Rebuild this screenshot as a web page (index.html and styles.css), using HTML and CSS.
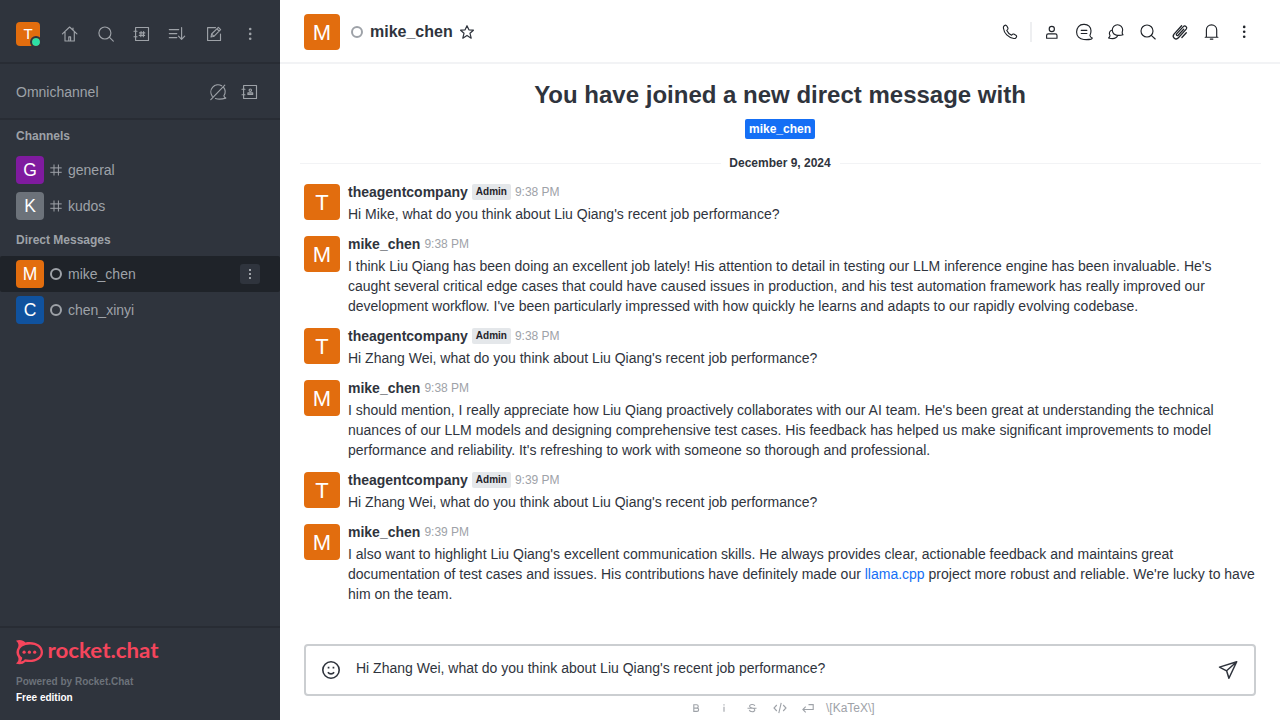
FILE: index.html
```html
<!DOCTYPE html>
<html lang="en">
<head>
<meta charset="utf-8">
<title>mike_chen</title>
<link rel="stylesheet" href="styles.css">
</head>
<body>
<div class="app">
<aside class="sidebar">
  <header class="side-top">
    <div class="avatar me">T<span class="online"></span></div>
    <nav class="side-icons">
      <svg class="icon" viewBox="0 0 20 20"><path d="M2.400 9.800 9.600 3l7.300 6.800M5 8v9h9.300V8M8.800 17v-4.200h1.800V17M13 6V4"/></svg>
      <svg class="icon" viewBox="0 0 20 20"><circle cx="8.900" cy="9" r="6"/><path d="m13.300 13.200 4 3.900"/></svg>
      <svg class="icon" viewBox="0 0 20 20"><path d="M3.600 3.500h12.900v13H3.600zM2 7.200h3M2 12.700h3M9.100 7.600l-.3 5M11.600 7.600l-.3 5M7.500 8.900h5.300M7.300 11.400h5.300"/></svg>
      <svg class="icon" viewBox="0 0 20 20"><path d="M1.300 5.600h9.400M1.300 9.600h7.500M1.300 13.600h7.500M13.600 3.500v11.700M10.500 12.200l3.100 3.100 3.100-3.100"/></svg>
      <svg class="icon" viewBox="0 0 20 20"><path d="M11.500 3.600H3.600v12.900h12.900V10M7 13l.6-3 6.800-6.600 2.200 2.200L9.900 12.300zM13 4.900l2.100 2.100M7.600 10l2.300 2.300"/></svg>
      <svg class="icon dots" viewBox="0 0 20 20"><circle cx="10.200" cy="5" r="1.300"/><circle cx="10.200" cy="9.900" r="1.300"/><circle cx="10.200" cy="14.800" r="1.300"/></svg>
    </nav>
  </header>
  <div class="omni"><span>Omnichannel</span>
    <div class="omni-icons">
      <svg class="icon" viewBox="0 0 20 20"><path d="M4.300 14.300A7.200 7.200 0 0 1 13.700 3.800M15.600 5.400c2 2.500 2.100 5.500.3 8.400.1 1.100.7 1.800 1.900 2.300-3.200 1-7.200 1.500-10.300.4M2.800 17.600 16.800 3.200"/></svg>
      <svg class="icon" viewBox="0 0 20 20"><path d="M3.600 3.500h12.900v13H3.600zM2 7.200h3M2 12.700h3"/><circle cx="10.300" cy="8.200" r="1.200"/><path d="M7.900 12.400v-1.500h4.800v1.500z"/></svg>
    </div>
  </div>
  <div class="rooms">
    <h3 class="group">Channels</h3>
    <a class="room"><span class="avatar small purple">G</span><svg class="status" viewBox="0 0 12 12"><path d="M4 .5v11M8.400.5v11M.3 3.900h11.400M.3 8.300h11.400"/></svg><span>general</span></a>
    <a class="room"><span class="avatar small gray">K</span><svg class="status" viewBox="0 0 12 12"><path d="M4 .5v11M8.400.5v11M.3 3.900h11.400M.3 8.300h11.400"/></svg><span>kudos</span></a>
    <h3 class="group">Direct Messages</h3>
    <a class="room active"><span class="avatar small">M</span><svg class="status ring" viewBox="0 0 12 12"><circle cx="6" cy="6" r="5"/></svg><span>mike_chen</span><span class="menu"><svg class="mini" viewBox="0 0 20 20"><path d="M9 5h2v2H9zM9 9h2v2H9zM9 13h2v2H9z"/></svg></span></a>
    <a class="room"><span class="avatar small blue">C</span><svg class="status ring" viewBox="0 0 12 12"><circle cx="6" cy="6" r="5"/></svg><span>chen_xinyi</span></a>
  </div>
  <footer class="side-foot">
    <svg class="logo" viewBox="0 0 144 26">
      <path class="mark" d="M0 .7C3.600-.8 7.400.1 9.400 2.500 19 .6 27 5.200 27 12.200S19 23.300 9.400 21.700C7 24.300 3.500 24.800 0 23.500 2.500 21.500 3 19.300 2.100 17.200-.1 14.200-.1 10.200 2.100 7.200 3 4.900 2.500 2.700 0 .7Z"/>
      <path class="bubble" d="M14.200 4.600c-6.500 0-11.200 3.100-11.200 7.600 0 2.200 1.200 4.100 3.200 5.400 0 1.600-.6 2.900-1.600 4 1.900-.2 3.300-1 4.200-2.300 8.200 1.500 15.900-1.200 15.900-7.100 0-4.500-4.600-7.600-10.500-7.600Z"/>
      <circle class="mark" cx="8.100" cy="12.200" r="1.600"/><circle class="mark" cx="13.400" cy="12.200" r="1.600"/><circle class="mark" cx="18.700" cy="12.200" r="1.600"/>
      <text x="31.500" y="18.300" textLength="111" lengthAdjust="spacingAndGlyphs">rocket.chat</text>
    </svg>
    <p class="powered">Powered by Rocket.Chat</p>
    <p class="edition">Free edition</p>
  </footer>
</aside>
<main class="main">
  <header class="room-head">
    <span class="avatar">M</span>
    <svg class="head-ring" viewBox="0 0 12 12"><circle cx="6" cy="6" r="5"/></svg>
    <h1>mike_chen</h1>
    <svg class="star" viewBox="0 0 16 16"><path d="m8 1.700 1.900 4.100 4.500.4-3.400 3.100 1.200 4.900L8 11.400l-4.200 2.800L5 9.300 1.600 6.200l4.500-.4z"/></svg>
    <div class="head-tools">
      <svg class="icon" viewBox="0 0 20 20"><path d="M4.200 3.800c1.500-1 2.200-.7 2.800.4l1 2c.3.800-.1 1.300-1.200 2.200 1 2.200 2.600 3.800 4.800 4.800.9-1.100 1.400-1.500 2.200-1.100l2.100 1.100c1 .6 1 1.500 0 2.600-.5.600-1.200.8-2.100.7C8.300 15.700 4 11.300 3.400 6c-.1-.9.100-1.700.8-2.200Z"/></svg>
      <span class="sep"></span>
      <svg class="icon" viewBox="0 0 20 20"><circle cx="9.800" cy="7" r="2.600"/><path d="M4.600 16.200v-2.700c0-1 .7-1.600 1.700-1.600h7c1 0 1.700.6 1.700 1.600v2.700z"/></svg>
      <svg class="icon" viewBox="0 0 20 20"><path d="M9.500 2.300h1A6.500 6.500 0 0 1 17 8.800c0 1.800-.3 3.200-1.100 4.700.2 1.500 1 2.100 2.400 2.500-.1.700-.5.900-1.200 1.100-2.400.6-4.800.6-7.300.4-4.400-.2-7.200-3.500-7.200-7.500 0-4.300 2.800-7.700 6.900-7.700ZM7.200 8.300h5.700M7.200 11.500h5.700"/></svg>
      <svg class="icon" viewBox="0 0 20 20"><path d="M17 12.800c-2.500.8-5.500.7-7.300.1a5.200 5.200 0 1 1 6.500-2.700c-.1 1.100.1 1.700.8 2.600ZM6.200 8C3.400 8.700 2.700 11.200 4 13.500c0 1.100-.5 1.700-1.400 2.500 3.300.9 7.700.9 9.100-2.500"/></svg>
      <svg class="icon" viewBox="0 0 20 20"><circle cx="9" cy="9" r="6"/><path d="m13.300 13.300 3.900 3.700"/></svg>
      <svg class="icon clip" viewBox="0 0 20 20"><path d="m13.700 7.200-5.600 6c-1 1.100-2.400-.2-1.500-1.300l6.700-7.300c1.700-1.800 4.500.5 2.900 2.500l-7.800 8.700c-2.700 2.900-6.800-.6-4.400-3.700l7.600-8.300M16.300 10.800l-4.400 4.700"/></svg>
      <svg class="icon" viewBox="0 0 20 20"><path d="M3.200 15.200h12.700M4.400 15V8.100c0-3 2.100-5.200 5.100-5.200s5.200 2.200 5.200 5.200V15M8.300 17.100h2.600"/></svg>
      <svg class="icon dots" viewBox="0 0 20 20"><circle cx="10.200" cy="4.900" r="1.300"/><circle cx="10.200" cy="9.800" r="1.300"/><circle cx="10.200" cy="14.700" r="1.300"/></svg>
    </div>
  </header>
  <section class="messages">
    <h2>You have joined a new direct message with</h2>
    <div class="who"><span>mike_chen</span></div>
    <div class="date"><span>December 9, 2024</span></div>
    <article class="msg"><span class="avatar">T</span><div class="body"><div class="meta"><b>theagentcompany</b><span class="tag">Admin</span><time>9:38 PM</time></div><p>Hi Mike, what do you think about Liu Qiang's recent job performance?</p></div></article>
    <article class="msg"><span class="avatar">M</span><div class="body"><div class="meta"><b>mike_chen</b><time>9:38 PM</time></div><p>I think Liu Qiang has been doing an excellent job lately! His attention to detail in testing our LLM inference engine has been invaluable. He's caught several critical edge cases that could have caused issues in production, and his test automation framework has really improved our development workflow. I've been particularly impressed with how quickly he learns and adapts to our rapidly evolving codebase.</p></div></article>
    <article class="msg"><span class="avatar">T</span><div class="body"><div class="meta"><b>theagentcompany</b><span class="tag">Admin</span><time>9:38 PM</time></div><p>Hi Zhang Wei, what do you think about Liu Qiang's recent job performance?</p></div></article>
    <article class="msg"><span class="avatar">M</span><div class="body"><div class="meta"><b>mike_chen</b><time>9:38 PM</time></div><p>I should mention, I really appreciate how Liu Qiang proactively collaborates with our AI team. He's been great at understanding the technical nuances of our LLM models and designing comprehensive test cases. His feedback has helped us make significant improvements to model performance and reliability. It's refreshing to work with someone so thorough and professional.</p></div></article>
    <article class="msg"><span class="avatar">T</span><div class="body"><div class="meta"><b>theagentcompany</b><span class="tag">Admin</span><time>9:39 PM</time></div><p>Hi Zhang Wei, what do you think about Liu Qiang's recent job performance?</p></div></article>
    <article class="msg"><span class="avatar">M</span><div class="body"><div class="meta"><b>mike_chen</b><time>9:39 PM</time></div><p>I also want to highlight Liu Qiang's excellent communication skills. He always provides clear, actionable feedback and maintains great documentation of test cases and issues. His contributions have definitely made our <a>llama.cpp</a> project more robust and reliable. We're lucky to have him on the team.</p></div></article>
  </section>
  <footer class="composer">
    <div class="box">
      <svg class="emoji" viewBox="0 0 20 20"><circle cx="10" cy="10" r="8.200"/><path d="M6.900 12.200c1.500 2.200 4.700 2.200 6.200 0"/><path class="eyes" d="M6.700 6.700h1.700v1.700H6.700zM11.600 6.700h1.700v1.700h-1.700z"/></svg>
      <span class="draft">Hi Zhang Wei, what do you think about Liu Qiang's recent job performance?</span>
      <svg class="send" viewBox="0 0 20 20"><path d="M18.700 1.700 1.500 7.100l7.100 3.700 2.300 7.500zM18.700 1.700 8.600 10.800"/></svg>
    </div>
    <div class="format">
      <svg viewBox="0 0 16 16"><path d="M5.800 4.800h2.800a1.600 1.600 0 0 1 0 3.300H5.800zM5.800 8.100h3.200a1.600 1.600 0 0 1 0 3.300H5.800z"/></svg>
      <svg viewBox="0 0 16 16"><path d="M8 6.800v5M8 4.200v1.200"/></svg>
      <svg viewBox="0 0 16 16"><path d="M10.800 6C10.300 3.800 5.600 4 5.600 6.300c0 2.200 5.200 1.300 5.200 3.600 0 2.500-5 2.300-5.500 0M3.500 8.200h9"/></svg>
      <svg viewBox="0 0 16 16"><path d="M4.800 5 2 8l2.800 3M11.200 5 14 8l-2.800 3M9.200 2.800 6.800 13.200"/></svg>
      <svg viewBox="0 0 16 16"><path d="M8.500 4.600h4.700v4.900H3M5.700 6.700 2.900 9.500l2.800 2.800"/></svg>
      <span>\[KaTeX\]</span>
    </div>
  </footer>
</main>
</div>
</body>
</html>
```
FILE: styles.css
```css
* { box-sizing: border-box; }
body { margin: 0; font: 14px/20px "Liberation Sans", Arial, sans-serif; color: #2f343d; background: #fff; }
h1, h2, h3, p { margin: 0; }
svg { fill: none; stroke: currentColor; flex: none; display: block; }
.app { display: flex; width: 1280px; height: 720px; overflow: hidden; }
.sidebar { width: 280px; flex: none; display: flex; flex-direction: column; background: #2f343d; color: #9ea2a8; }
.side-top { height: 64px; padding: 4px 20px 0 16px; display: flex; align-items: center; justify-content: space-between; border-bottom: 2px solid #282c34; }
.side-top .me { margin-top: 2px; }
.side-icons { display: flex; gap: 16px; margin-top: 2px; }
.icon { width: 20px; height: 20px; stroke-width: 1.15; stroke-linejoin: round; stroke-linecap: round; }
.clip { stroke-width: 1.3; }
.dots { fill: currentColor; stroke: none; }
.avatar { width: 36px; height: 36px; padding-top: 1px; flex: none; display: flex; align-items: center; justify-content: center; border-radius: 4px; background: #e26d0e; color: #fff; font-size: 22px; line-height: 36px; }
.me { position: relative; width: 24px; height: 24px; padding: 0; font-size: 15px; line-height: 24px; }
.online { position: absolute; left: 14px; top: 14px; width: 12px; height: 12px; border-radius: 50%; background: #2de0a5; border: 2px solid #2f343d; background-clip: padding-box; }
.small { width: 28px; height: 28px; padding: 0; font-size: 17.500px; line-height: 28px; }
.purple { background: #7f1b9f; }
.gray { background: #6c727a; }
.blue { background: #10529e; }
.omni { height: 56px; padding: 0 20px 0 16px; display: flex; align-items: center; justify-content: space-between; border-bottom: 2px solid #282c34; }
.omni-icons { display: flex; gap: 12px; margin-top: 2px; }
.omni > span { padding-top: 2px; }
.rooms { flex: 1; }
.group { height: 32px; padding-left: 16px; font-size: 12px; line-height: 32px; }
.room { height: 36px; padding: 0 20px 0 16px; display: flex; align-items: center; }
.active { background: #1f2329; border-radius: 2px; }
.status { width: 12px; height: 12px; margin: 0 6px; }
.ring { stroke-width: 2; }
.menu { width: 20px; height: 20px; margin-left: auto; background: #2f343d; border-radius: 3px; }
.mini { width: 20px; height: 20px; fill: currentColor; stroke: none; }
.side-foot { height: 94px; padding: 12px 16px 0; border-top: 2px solid #282c34; font-size: 10px; line-height: 16px; font-weight: 700; }
.logo { width: 144px; height: 26px; stroke: none; overflow: visible; }
.mark { fill: #f5455c; }
.bubble { fill: #2f343d; }
.logo text { fill: #f5455c; font: 700 21px/26px Lato, sans-serif; }
.powered { color: #6c727a; margin-top: 8px; }
.edition { color: #fff; }
.main { flex: 1; min-width: 0; display: flex; flex-direction: column; }
.room-head { height: 64px; flex: none; padding: 2px 26px 0 24px; display: flex; align-items: center; border-bottom: 2px solid #f2f3f5; }
.head-ring { width: 12px; height: 12px; margin: 0 7px 0 11px; stroke: #9ea2a8; stroke-width: 2; }
.room-head h1 { font-size: 16px; line-height: 24px; }
.star { width: 16px; height: 16px; margin-left: 6px; stroke-width: 1.2; stroke-linejoin: round; }
.head-tools { margin-left: auto; display: flex; gap: 12px; color: #1f2329; }
.sep { width: 2px; height: 20px; margin: 0 -2px; background: #eeeff1; }
.messages { flex: 1; padding: 15px 20px 0; }
.messages h2 { font-size: 24px; line-height: 32px; text-align: center; }
.who { display: flex; justify-content: center; margin-top: 8px; }
.who span { padding: 0 4px; border-radius: 2px; background: #156ff5; color: #fff; font-size: 12px; font-weight: 700; }
.date { display: flex; align-items: center; gap: 9px; height: 20px; margin: 14px -1px 9px 0; font-size: 12px; font-weight: 700; }
.date span { margin-left: -1px; }
.date::before, .date::after { content: ""; flex: 1; height: 1px; background: #f2f3f5; }
.msg { display: flex; gap: 8px; padding: 0 4px 10px; }
.msg .avatar { margin-top: 2px; }
.body { flex: 1; }
.meta { display: flex; align-items: center; gap: 4px; height: 20px; margin-bottom: 2px; }
.tag { padding: 0 4px; border-radius: 2px; background: #e4e7ea; color: #1f2329; font-size: 10px; line-height: 16px; font-weight: 700; }
time { font-size: 12px; color: #9ea2a8; }
.msg a { color: #156ff5; }
.composer { height: 76px; flex: none; padding: 0 24px; }
.box { height: 52px; padding: 0 16px 0 15px; display: flex; align-items: center; border: 2px solid #cbced1; border-radius: 4px; }
.emoji { width: 20px; height: 20px; stroke-width: 1.6; }
.eyes { fill: currentColor; stroke: none; }
.draft { margin: -4px auto 0 15px; }
.send { width: 20px; height: 20px; stroke-width: 1.5; stroke-linejoin: round; }
.format { display: flex; align-items: center; gap: 12px; height: 24px; padding-left: 384px; color: #9ea2a8; font-size: 12px; }
.format svg { width: 16px; height: 16px; stroke-width: 1.1; }
.format span { margin-left: -2px; }
```
